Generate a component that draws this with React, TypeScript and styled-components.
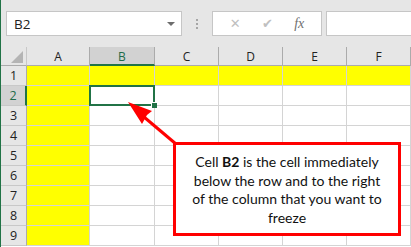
import styled, { createGlobalStyle } from 'styled-components';
import { Fragment } from 'react';

const GlobalStyle = createGlobalStyle`
  html, body {
    margin: 0;
    padding: 0;
    width: 411px;
    height: 247px;
    overflow: hidden;
    background: #ffffff;
  }
`;

const Window = styled.div`
  position: relative;
  width: 410px;
  height: 247px;
  border-left: 1px solid #217346;
  overflow: hidden;
  font-family: 'Open Sans', 'Noto Sans', sans-serif;
`;

const FormulaRow = styled.div`
  height: 47px;
  background: #e6e6e6;
  display: flex;
  align-items: flex-start;
  padding-top: 11px;
  padding-left: 5px;
  box-sizing: border-box;
`;

const NameBox = styled.div`
  width: 176px;
  height: 25px;
  box-sizing: border-box;
  background: #fff;
  border: 1px solid #c6c6c6;
  display: flex;
  align-items: center;
  justify-content: space-between;
  padding: 0 6px 0 7px;
  font-size: 13.5px;
  color: #222;
`;

const DropArrow = styled.span`
  width: 0;
  height: 0;
  border-left: 4px solid transparent;
  border-right: 4px solid transparent;
  border-top: 4px solid #6d6d6d;
`;

const Grip = styled.div`
  width: 30px;
  height: 25px;
  display: flex;
  flex-direction: column;
  align-items: center;
  justify-content: center;
  gap: 2px;

  & > span {
    width: 2px;
    height: 2px;
    background: #a6a6a6;
  }
`;

const FxBox = styled.div`
  width: 110px;
  height: 25px;
  box-sizing: border-box;
  background: #fff;
  border: 1px solid #c6c6c6;
  display: flex;
  align-items: center;
  justify-content: space-around;
  padding: 0 6px;
`;

const FxGlyph = styled.span<{ $dark?: boolean }>`
  color: ${(p) => (p.$dark ? '#707070' : '#c0c0c0')};
  font-family: ${(p) => (p.$dark ? "'Liberation Serif', serif" : "'DejaVu Sans', sans-serif")};
  font-style: ${(p) => (p.$dark ? 'italic' : 'normal')};
  font-size: ${(p) => (p.$dark ? '14px' : '13px')};
`;

const FormulaInput = styled.div`
  flex: 1;
  height: 25px;
  margin-left: 4px;
  box-sizing: border-box;
  background: #fff;
  border: 1px solid #c6c6c6;
  border-right: none;
`;

const Sheet = styled.div`
  display: grid;
  grid-template-columns: 26px 63px 65px 64px 64px 64px 64px;
  grid-template-rows: 19px repeat(9, 20px);
`;

const Corner = styled.div`
  background: #e6e6e6;
  border-right: 1px solid #c8c8c8;
  border-bottom: 1px solid #ababab;
  box-sizing: border-box;
  position: relative;

  &::after {
    content: '';
    position: absolute;
    right: 3px;
    bottom: 2px;
    width: 0;
    height: 0;
    border-left: 12px solid transparent;
    border-bottom: 12px solid #b4b4b4;
  }
`;

const ColHead = styled.div<{ $active?: boolean }>`
  background: ${(p) => (p.$active ? '#d2d2d2' : '#e6e6e6')};
  border-right: 1px solid #ababab;
  border-bottom: ${(p) => (p.$active ? '2px solid #217346' : '1px solid #ababab')};
  box-sizing: border-box;
  display: flex;
  align-items: center;
  justify-content: center;
  font-size: 12px;
  color: ${(p) => (p.$active ? '#1e6b49' : '#222')};
  padding-top: ${(p) => (p.$active ? '1px' : '0')};
`;

const RowHead = styled.div<{ $active?: boolean }>`
  background: ${(p) => (p.$active ? '#d2d2d2' : '#e6e6e6')};
  border-right: ${(p) => (p.$active ? '2px solid #217346' : '1px solid #ababab')};
  border-bottom: 1px solid #c8c8c8;
  box-sizing: border-box;
  display: flex;
  align-items: center;
  justify-content: center;
  font-size: 12.5px;
  color: ${(p) => (p.$active ? '#1e6b49' : '#222')};
`;

const Cell = styled.div<{ $fill?: boolean; $selected?: boolean }>`
  position: relative;
  background: ${(p) => (p.$fill ? '#ffff00' : '#fff')};
  border-right: 1px solid #d4d4d4;
  border-bottom: 1px solid #d4d4d4;
  box-sizing: border-box;

  ${(p) =>
    p.$selected &&
    `
    &::before {
      content: '';
      position: absolute;
      left: -1px;
      top: -1px;
      right: -1px;
      bottom: -1px;
      border: 2px solid #217346;
      z-index: 2;
    }
    &::after {
      content: '';
      position: absolute;
      right: -3px;
      bottom: -3px;
      width: 5px;
      height: 5px;
      background: #217346;
      border-left: 1px solid #fff;
      border-top: 1px solid #fff;
      z-index: 3;
    }
  `}
`;

const Overlay = styled.svg`
  position: absolute;
  left: -1px;
  top: 0;
  pointer-events: none;
  z-index: 5;
`;

const Callout = styled.div`
  position: absolute;
  left: 172px;
  top: 142px;
  width: 228px;
  height: 94px;
  box-sizing: border-box;
  border: 3px solid #ff0000;
  background: #fff;
  z-index: 6;
  display: flex;
  align-items: center;
  justify-content: center;
  text-align: center;
  padding: 2px 12px 0;
  font-family: Lato, 'Open Sans', sans-serif;
  font-size: 14px;
  line-height: 18.5px;
  color: #111;
`;

const CalloutText = styled.p`
  margin: 0;

  & b {
    font-weight: 700;
  }
`;

const columns = ['A', 'B', 'C', 'D', 'E', 'F'];
const rows = [1, 2, 3, 4, 5, 6, 7, 8, 9];

export default function App() {
  return (
    <>
      <GlobalStyle />
      <Window>
        <FormulaRow>
          <NameBox>
            <span>B2</span>
            <DropArrow />
          </NameBox>
          <Grip>
            <span />
            <span />
            <span />
          </Grip>
          <FxBox>
            <FxGlyph>✕</FxGlyph>
            <FxGlyph>✔</FxGlyph>
            <FxGlyph $dark>fx</FxGlyph>
          </FxBox>
          <FormulaInput />
        </FormulaRow>
        <Sheet>
          <Corner />
          {columns.map((c) => (
            <ColHead key={c} $active={c === 'B'}>
              {c}
            </ColHead>
          ))}
          {rows.map((r) => (
            <Fragment key={r}>
              <RowHead $active={r === 2}>{r}</RowHead>
              {columns.map((c) => (
                <Cell key={`${c}${r}`} $fill={r === 1 || c === 'A'} $selected={r === 2 && c === 'B'} />
              ))}
            </Fragment>
          ))}
        </Sheet>
        <Overlay width="411" height="247" viewBox="0 0 411 247">
          <line x1="176" y1="144" x2="144" y2="117" stroke="#ff0000" strokeWidth="3" />
          <polygon points="128,102 152,111 147,115 142,124" fill="#ff0000" />
        </Overlay>
        <Callout>
          <CalloutText>
            Cell <b>B2</b> is the cell immediately below the row and to the right of the column that you want to
            freeze
          </CalloutText>
        </Callout>
      </Window>
    </>
  );
}
